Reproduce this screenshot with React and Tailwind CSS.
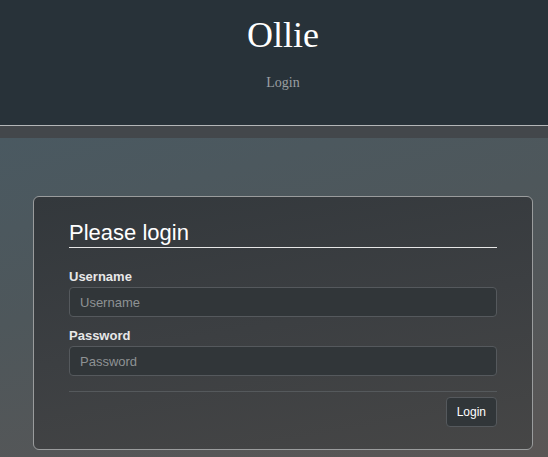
import React from 'react';

export default function App() {
    return (
        <div className="w-[548px] h-[457px] overflow-hidden" style={{ fontFamily: '"Liberation Sans", Arial, sans-serif' }}>
            {/* Header */}
            <header className="h-[126px] bg-[#283239] border-b border-[#b4b6b8] text-center pl-[18px]" style={{ fontFamily: '"Liberation Serif", "Times New Roman", serif' }}>
                <h1 className="pt-[14px] text-[36px] leading-[42px] text-white">Ollie</h1>
                <p className="mt-[19px] text-[14px] leading-[16px] text-[#9b9fa2]">Login</p>
            </header>
            <div className="h-[12px] bg-[#43474b]" />

            {/* Main */}
            <main className="h-[319px] bg-[linear-gradient(165deg,#4a5961_0%,#4e575b_40%,#5a5655_100%)] pt-[58px] pl-[33px] pr-[15px]">
                <div className="h-[254px] rounded-[6px] border border-[#9a9c9d] bg-[linear-gradient(170deg,#33383c_0%,#3c3f42_50%,#464646_100%)] px-[35px] pt-[21px]">
                    <h2 className="text-[22px] leading-[29px] text-white border-b border-[#e6e6e6]">Please login</h2>

                    <form className="mt-[21px]">
                        <label className="block text-[13px] leading-[16px] font-bold text-[#e8e8e8]">Username</label>
                        <input
                            placeholder="Username"
                            className="mt-[2px] w-full h-[30px] rounded-[4px] border border-[#55595d] bg-[#313639] px-[10px] text-[13px] text-white placeholder:text-[#8e9294] outline-none"
                        />
                        <label className="block mt-[11px] text-[13px] leading-[16px] font-bold text-[#e8e8e8]">Password</label>
                        <input
                            type="password"
                            placeholder="Password"
                            className="mt-[2px] w-full h-[30px] rounded-[4px] border border-[#55595d] bg-[#313639] px-[10px] text-[13px] text-white placeholder:text-[#8e9294] outline-none"
                        />
                        <div className="mt-[15px] border-t border-[#55595c]" />
                        <div className="flex justify-end mt-[5px]">
                            <button type="button" className="h-[30px] px-[10px] rounded-[4px] border border-[#55595d] bg-[#313639] text-[12px] text-white">
                                Login
                            </button>
                        </div>
                    </form>
                </div>
            </main>
        </div>
    );
}
